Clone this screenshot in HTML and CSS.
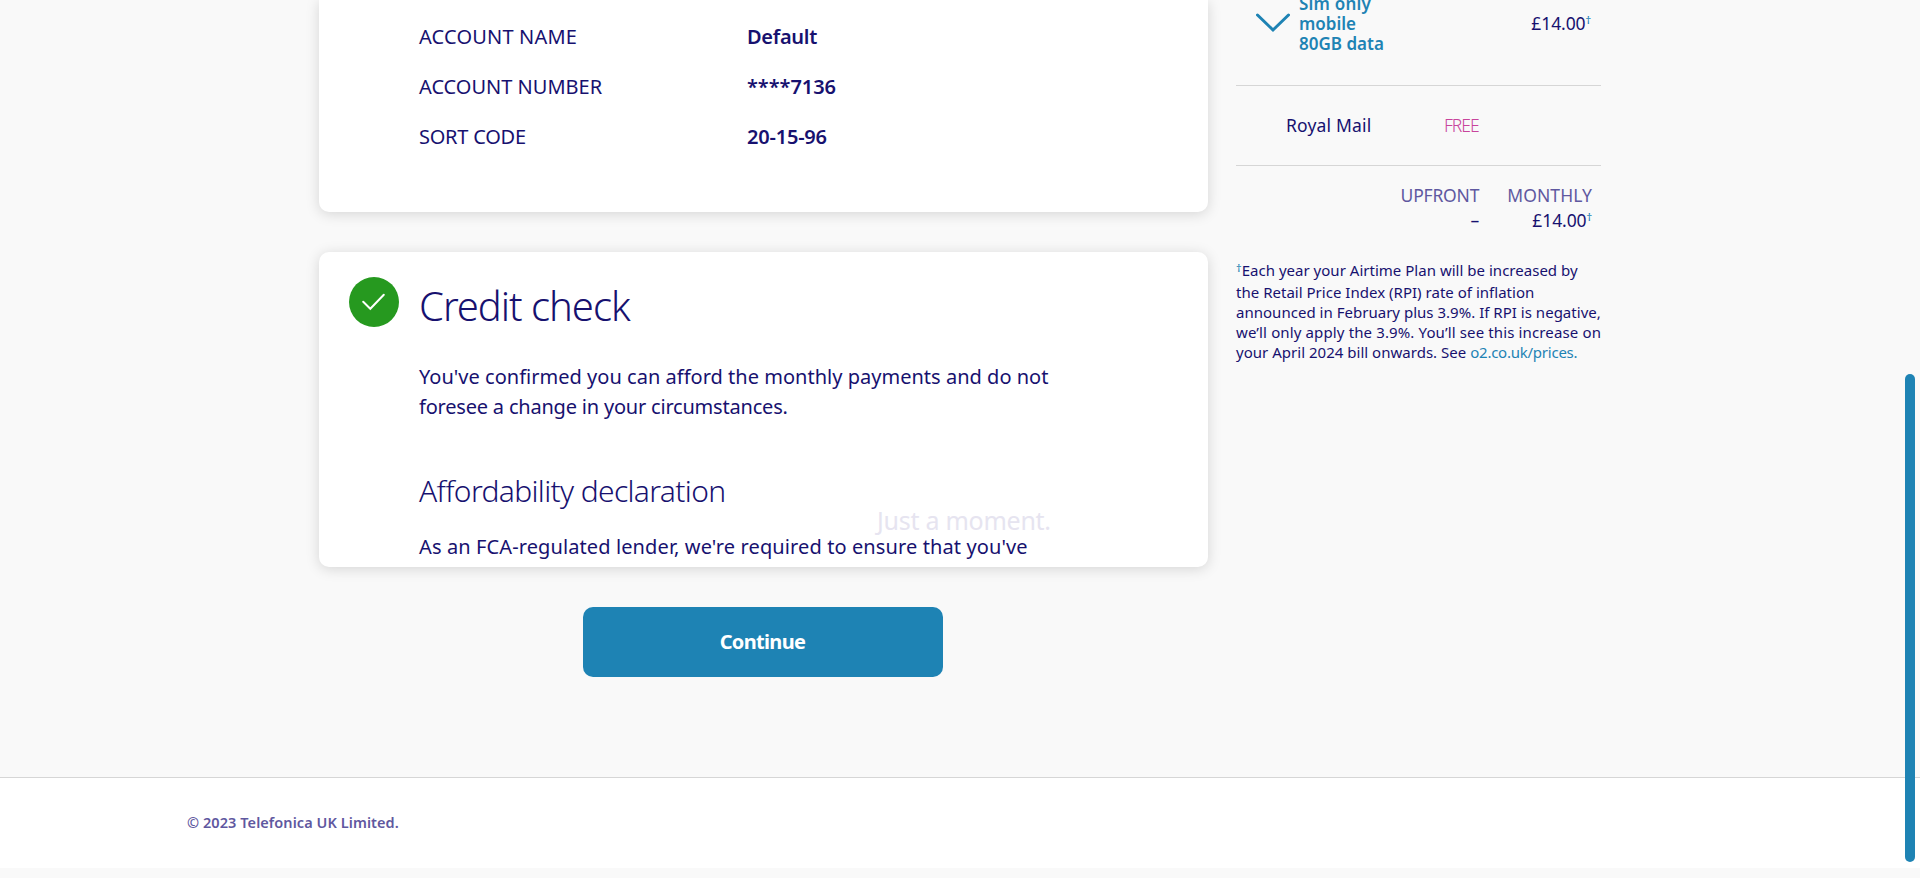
FILE: index.html
```html
<!DOCTYPE html>
<html lang="en">
<head>
<meta charset="utf-8">
<title>Order review</title>
<link rel="stylesheet" href="styles.css">
</head>
<body>
<div class="page">
  <div class="content">
    <main class="main">
      <section class="card account">
        <dl class="details">
          <dt class="account-name">ACCOUNT NAME</dt><dd class="holder">Default</dd>
          <dt>ACCOUNT NUMBER</dt><dd>****7136</dd>
          <dt class="sort-code">SORT CODE</dt><dd class="sort-value">20-15-96</dd>
        </dl>
      </section>
      <section class="card credit">
        <svg class="tick" viewBox="0 0 50 50"><circle cx="25" cy="25" r="25"/><path d="M14.2 24.8 21.300 31.800 34.800 17.800"/></svg>
        <div class="credit-body">
          <h2 class="title">Credit check</h2>
          <p class="text">You've confirmed you can afford the monthly payments and do not<br><span class="text-tight">foresee a change in your circumstances.</span></p>
          <h3 class="subtitle">Affordability declaration</h3>
          <p class="text text-wide">As an FCA-regulated lender, we're required to ensure that you've</p>
        </div>
        <div class="loading">Just a moment.</div>
      </section>
      <button class="continue">Continue</button>
    </main>
    <aside class="summary">
      <div class="item">
        <svg class="chevron" viewBox="0 0 34 20"><path d="M1.500 2 17 17 32.500 2"/></svg>
        <div class="item-name"><span class="item-first">Sim only</span><br>mobile<br>80GB data</div>
        <div class="price">£14.00<span class="dagger">†</span></div>
      </div>
      <div class="delivery"><span class="carrier">Royal Mail</span><span class="free">FREE</span></div>
      <div class="totals">
        <div class="total"><span class="head upfront">UPFRONT</span><span class="dash">–</span></div>
        <div class="total"><span class="head monthly">MONTHLY</span><span class="price">£14.00<span class="dagger">†</span></span></div>
      </div>
      <p class="note"><span class="first"><span class="dagger">†</span>Each year your Airtime Plan will be increased by</span><br>the Retail Price Index (RPI) rate of inflation<br>announced in February plus 3.9%. If RPI is negative,<br><span class="note-wide">we’ll only apply the 3.9%. You’ll see this increase on</span><br>your April 2024 bill onwards. See <span class="link">o2.co.uk/prices.</span></p>
    </aside>
  </div>
  <footer class="footer">© 2023 Telefonica UK Limited.</footer>
</div>
<div class="scrollbar"></div>
</body>
</html>
```
FILE: styles.css
```css
* { box-sizing: border-box; }
body { margin: 0; background: #f9f9f9; color: #17116f; font-family: "Noto Sans", "Open Sans", sans-serif; overflow: hidden; }
h2, h3, p, dl, dd { margin: 0; }
.page { height: 878px; display: flex; flex-direction: column; padding-bottom: 10px; }
.content { flex: 1; display: flex; gap: 28px; padding-left: 319px; }
.main { width: 889px; display: flex; flex-direction: column; align-items: center; }
.card { width: 100%; background: #fff; box-shadow: 0 2px 14px rgba(0, 0, 0, 0.15); }
.account { height: 212px; padding: 12px 100px 0; border-radius: 0 0 10px 10px; }
.details { display: grid; grid-template-columns: 328px 1fr; font-size: 20px; line-height: 50px; }
.details dd { font-weight: 600; letter-spacing: -0.06px; }
.details .holder { letter-spacing: -0.28px; }
.details .sort-value { letter-spacing: -0.2px; }
.account-name { letter-spacing: 0.18px; }
.sort-code { letter-spacing: -0.24px; }
.credit { position: relative; height: 315px; margin-top: 40px; padding: 25px 30px 0 29.5px; border-radius: 10px; display: flex; gap: 20.5px; overflow: hidden; }
.tick { width: 50px; height: 50px; flex: none; fill: #26991f; }
.tick path { fill: none; stroke: #fff; stroke-width: 2; stroke-linecap: round; }
.credit-body { white-space: nowrap; }
.title { font-size: 40px; font-weight: 300; line-height: 60px; letter-spacing: -1.03px; margin-top: -1px; }
.text { font-size: 20px; line-height: 30px; letter-spacing: 0.02px; }
.text-tight { letter-spacing: -0.2px; }
.text-wide { letter-spacing: 0.11px; }
.title + .text { margin-top: 26px; }
.subtitle { font-size: 30px; font-weight: 300; line-height: 40px; letter-spacing: -0.65px; margin-top: 49px; margin-bottom: 21px; }
.loading { position: absolute; left: 558px; top: 250px; font-size: 25px; line-height: 36px; letter-spacing: -0.26px; color: #e6e4f0; white-space: nowrap; }
.continue { position: relative; left: -1px; margin-top: 40px; padding: 0 0 1px; width: 360px; height: 70px; border: 0; border-radius: 10px; background: #1e83b4; color: #fff; font: 700 20px "Noto Sans", sans-serif; letter-spacing: -0.65px; }
.summary { width: 365px; white-space: nowrap; }
.item { height: 86px; border-bottom: 1px solid #d6d6d6; display: flex; padding: 0 10px 0 20px; }
.chevron { width: 34px; height: 20px; margin-top: 13px; flex: none; fill: none; stroke: #1e83b4; stroke-width: 3; stroke-linecap: round; }
.item-name { flex: 1; margin: -6px 0 0 9px; color: #1e83b4; font-size: 17px; font-weight: 600; line-height: 20px; }
.item-first { letter-spacing: 0.2px; }
.price { font-size: 17.5px; line-height: 24px; letter-spacing: -0.1px; }
.item .price { margin-top: 11px; }
.dagger { font-size: 11px; font-weight: 500; color: #1e83b4; position: relative; top: -6px; line-height: 0; }
.delivery { height: 80px; border-bottom: 1px solid #d6d6d6; display: grid; grid-template-columns: 158px auto; align-items: center; padding: 0 0 2px 50px; font-size: 17.5px; }
.carrier { letter-spacing: 0.18px; }
.free { color: #c8449c; font-weight: 300; letter-spacing: -1px; }
.totals { display: flex; justify-content: flex-end; gap: 28px; padding: 17px 9px 0 0; font-size: 17.5px; line-height: 25px; }
.total { display: flex; flex-direction: column; align-items: flex-end; }
.total .price { line-height: 25px; }
.head { color: #5f58a0; }
.upfront { letter-spacing: -0.2px; }
.monthly { letter-spacing: 0.1px; }
.note { margin-top: 25px; font-size: 15px; line-height: 20px; letter-spacing: 0.02px; }
.note .first { line-height: 24px; }
.note .dagger { top: -4px; }
.note-wide { letter-spacing: 0.13px; }
.link { color: #1e83b4; letter-spacing: -0.24px; }
.footer { height: 91px; border-top: 1px solid #d6d6d6; background: #fff; padding: 34px 0 0 187px; font-size: 14.5px; font-weight: 600; line-height: 20px; letter-spacing: 0.07px; color: #5f58a0; }
.scrollbar { position: absolute; left: 1905px; top: 374px; width: 10px; height: 488px; border-radius: 5px; background: #1e83b4; }
```
